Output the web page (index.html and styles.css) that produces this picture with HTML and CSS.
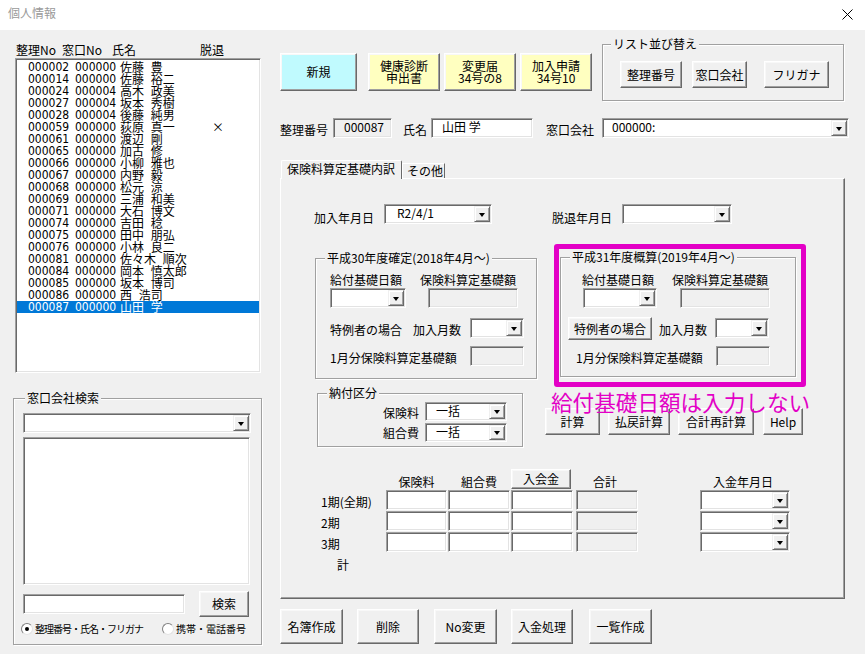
FILE: index.html
```html
<!DOCTYPE html>
<html lang="ja">
<head>
<meta charset="utf-8">
<title>個人情報</title>
<link rel="stylesheet" href="styles.css">
</head>
<body>
<div class="titlebar">
  <span class="title">個人情報</span>
  <svg class="close" width="11" height="11" viewBox="0 0 11 11"><path d="M0.5 0.5L10.5 10.5M10.5 0.5L0.5 10.5" stroke="#000" stroke-width="1"/></svg>
</div>
<div class="main">
  <div class="left">
    <div class="list-head"><span class="h-no">整理No</span><span class="h-win">窓口No</span><span class="h-name">氏名</span><span>脱退</span></div>
    <div class="listbox sunken">
      <div class="lrow"><span class="c-no">000002</span><span class="c-win">000000</span><span class="c-name">佐藤 豊</span></div>
      <div class="lrow"><span class="c-no">000014</span><span class="c-win">000000</span><span class="c-name">佐藤 裕二</span></div>
      <div class="lrow"><span class="c-no">000024</span><span class="c-win">000004</span><span class="c-name">高木 政美</span></div>
      <div class="lrow"><span class="c-no">000027</span><span class="c-win">000004</span><span class="c-name">坂本 秀樹</span></div>
      <div class="lrow"><span class="c-no">000028</span><span class="c-win">000004</span><span class="c-name">後藤 純男</span></div>
      <div class="lrow"><span class="c-no">000059</span><span class="c-win">000000</span><span class="c-name">荻原 真一</span><span class="c-out">×</span></div>
      <div class="lrow"><span class="c-no">000061</span><span class="c-win">000000</span><span class="c-name">渡辺 剛</span></div>
      <div class="lrow"><span class="c-no">000065</span><span class="c-win">000000</span><span class="c-name">加古 修</span></div>
      <div class="lrow"><span class="c-no">000066</span><span class="c-win">000000</span><span class="c-name">小柳 雅也</span></div>
      <div class="lrow"><span class="c-no">000067</span><span class="c-win">000000</span><span class="c-name">内野 毅</span></div>
      <div class="lrow"><span class="c-no">000068</span><span class="c-win">000000</span><span class="c-name">松元 涼</span></div>
      <div class="lrow"><span class="c-no">000069</span><span class="c-win">000000</span><span class="c-name">三浦 和美</span></div>
      <div class="lrow"><span class="c-no">000071</span><span class="c-win">000000</span><span class="c-name">大石 博文</span></div>
      <div class="lrow"><span class="c-no">000074</span><span class="c-win">000000</span><span class="c-name">吉田 稔</span></div>
      <div class="lrow"><span class="c-no">000075</span><span class="c-win">000000</span><span class="c-name">田中 朋弘</span></div>
      <div class="lrow"><span class="c-no">000076</span><span class="c-win">000000</span><span class="c-name">小林 良二</span></div>
      <div class="lrow"><span class="c-no">000081</span><span class="c-win">000000</span><span class="c-name">佐々木 順次</span></div>
      <div class="lrow"><span class="c-no">000084</span><span class="c-win">000000</span><span class="c-name">岡本 慎太郎</span></div>
      <div class="lrow"><span class="c-no">000085</span><span class="c-win">000000</span><span class="c-name">坂本 博司</span></div>
      <div class="lrow"><span class="c-no">000086</span><span class="c-win">000000</span><span class="c-name">西 浩司</span></div>
      <div class="lrow sel"><span class="c-no">000087</span><span class="c-win">000000</span><span class="c-name">山田 学</span></div>
    </div>
    <div class="group search-group">
      <span class="glabel search-label">窓口会社検索</span>
      <div class="combo sunken search-combo"><span class="ctext"></span><span class="cbtn"></span></div>
      <div class="search-list sunken"></div>
      <div class="search-row">
        <div class="field sunken search-input"></div>
        <button class="btn search-btn">検索</button>
      </div>
      <div class="radio-row">
        <span class="radio on"></span><span class="radio-text r1">整理番号・氏名・フリガナ</span>
        <span class="radio r2"></span><span class="radio-text">携帯・電話番号</span>
      </div>
    </div>
  </div>

  <div class="right">
    <div class="toolbar">
      <button class="btn big cyan">新規</button>
      <button class="btn big yellow y1">健康診断<br>申出書</button>
      <button class="btn big yellow y2">変更届<br>34号の8</button>
      <button class="btn big yellow y2">加入申請<br>34号10</button>
      <div class="group sort-group">
        <span class="glabel sort-label">リスト並び替え</span>
        <button class="btn sort s1">整理番号</button>
        <button class="btn sort s2">窓口会社</button>
        <button class="btn sort s3">フリガナ</button>
      </div>
    </div>

    <div class="idrow">
      <span class="lbl id-lbl">整理番号</span>
      <div class="field ro sunken id-field">000087</div>
      <span class="lbl name-lbl">氏名</span>
      <div class="field sunken name-field">山田 学</div>
      <span class="lbl company-lbl">窓口会社</span>
      <div class="combo sunken company-combo"><span class="ctext">000000:</span><span class="cbtn"></span></div>
    </div>

    <div class="tabs">
      <div class="tab active">保険料算定基礎内訳</div>
      <div class="tab">その他</div>
    </div>
    <div class="panel">
      <div class="row-a">
        <span class="lbl date-lbl">加入年月日</span>
        <div class="combo sunken join-combo"><span class="ctext join-text">R2/4/1</span><span class="cbtn"></span></div>
        <span class="lbl date-lbl leave-lbl">脱退年月日</span>
        <div class="combo sunken leave-combo"><span class="ctext"></span><span class="cbtn"></span></div>
      </div>

      <div class="twocol">
        <div class="col-l">
          <div class="group grp30">
            <span class="glabel">平成30年度確定(2018年4月～)</span>
            <div class="grp-heads"><span class="head1">給付基礎日額</span><span>保険料算定基礎額</span></div>
            <div class="grp-fields">
              <div class="combo sunken day-combo30"><span class="ctext"></span><span class="cbtn"></span></div>
              <div class="field ro sunken base-field30"></div>
            </div>
            <div class="grp-r3">
              <span class="lbl special-lbl">特例者の場合</span>
              <span class="lbl months-lbl">加入月数</span>
              <div class="combo sunken months-combo"><span class="ctext"></span><span class="cbtn"></span></div>
            </div>
            <div class="grp-r4">
              <span class="lbl month-base-lbl">1月分保険料算定基礎額</span>
              <div class="field ro sunken small-field"></div>
            </div>
          </div>

          <div class="group grp-pay">
            <span class="glabel">納付区分</span>
            <div class="pay-row">
              <span class="lbl pay-lbl">保険料</span>
              <div class="combo sunken pay-combo"><span class="ctext pay-text">一括</span><span class="cbtn"></span></div>
            </div>
            <div class="pay-row">
              <span class="lbl pay-lbl pay-lbl2">組合費</span>
              <div class="combo sunken pay-combo"><span class="ctext pay-text">一括</span><span class="cbtn"></span></div>
            </div>
          </div>
        </div>

        <div class="col-r">
          <div class="highlight">
            <div class="group grp31">
              <span class="glabel">平成31年度概算(2019年4月～)</span>
              <div class="grp-heads"><span class="head1">給付基礎日額</span><span>保険料算定基礎額</span></div>
              <div class="grp-fields">
                <div class="combo sunken day-combo31"><span class="ctext"></span><span class="cbtn"></span></div>
                <div class="field ro sunken base-field31"></div>
              </div>
              <div class="grp-r3 r3-31">
                <button class="btn special-btn">特例者の場合</button>
                <span class="lbl months-lbl31">加入月数</span>
                <div class="combo sunken months-combo months-combo31"><span class="ctext"></span><span class="cbtn"></span></div>
              </div>
              <div class="grp-r4 r4-31">
                <span class="lbl month-base-lbl">1月分保険料算定基礎額</span>
                <div class="field ro sunken small-field"></div>
              </div>
            </div>
          </div>
          <div class="note">給付基礎日額は入力しない</div>
          <div class="calc-btns">
            <button class="btn calc k1">計算</button>
            <button class="btn calc k2">払戻計算</button>
            <button class="btn calc k3">合計再計算</button>
            <button class="btn calc k4">Help</button>
          </div>
        </div>
      </div>

      <div class="pay-table">
        <div class="trow thead">
          <span class="tlabel"></span>
          <span class="th c1">保険料</span>
          <span class="th c2">組合費</span>
          <button class="btn c3 fee-btn">入会金</button>
          <span class="th c4">合計</span>
          <span class="th c5">入金年月日</span>
        </div>
        <div class="trow">
          <span class="tlabel">1期(全期)</span>
          <div class="field sunken c1"></div>
          <div class="field sunken c2"></div>
          <div class="field sunken c3"></div>
          <div class="field ro sunken c4"></div>
          <div class="combo sunken c5"><span class="ctext"></span><span class="cbtn"></span></div>
        </div>
        <div class="trow">
          <span class="tlabel">2期</span>
          <div class="field sunken c1"></div>
          <div class="field sunken c2"></div>
          <div class="field sunken c3"></div>
          <div class="field ro sunken c4"></div>
          <div class="combo sunken c5"><span class="ctext"></span><span class="cbtn"></span></div>
        </div>
        <div class="trow">
          <span class="tlabel">3期</span>
          <div class="field sunken c1"></div>
          <div class="field sunken c2"></div>
          <div class="field sunken c3"></div>
          <div class="field ro sunken c4"></div>
          <div class="combo sunken c5"><span class="ctext"></span><span class="cbtn"></span></div>
        </div>
        <div class="total-row">計</div>
      </div>
    </div>

    <div class="bottom-btns">
      <button class="btn foot f1">名簿作成</button>
      <button class="btn foot f2">削除</button>
      <button class="btn foot f3">No変更</button>
      <button class="btn foot f4">入金処理</button>
      <button class="btn foot f5">一覧作成</button>
    </div>
  </div>
</div>
</body>
</html>
```

FILE: styles.css
```css
* { box-sizing: border-box; }
html, body { margin: 0; padding: 0; }
body {
  width: 865px;
  height: 654px;
  overflow: hidden;
  background: #f0f0f0;
  font-family: "Noto Sans CJK JP", "Noto Sans", sans-serif;
  font-size: 12px;
  line-height: 14px;
  color: #000;
}
button { font: inherit; color: inherit; padding: 0; margin: 0; }
.main * { flex-shrink: 0; }

/* title bar */
.titlebar {
  height: 30px;
  background: #fff;
  display: flex;
  justify-content: space-between;
  align-items: flex-start;
  padding: 6px 12px 0 8px;
}
.title { color: #9a9a9a; }
.close { margin-top: 3px; }

.main { display: flex; height: 624px; }

/* 3D primitives */
.sunken {
  border: 1px solid;
  border-color: #a0a0a0 #fff #fff #a0a0a0;
  box-shadow: inset 1px 1px 0 #696969, inset -1px -1px 0 #e3e3e3;
}
.btn {
  background: #f0f0f0;
  border: 1px solid;
  border-color: #fff #696969 #696969 #fff;
  box-shadow: inset -1px -1px 0 #a0a0a0, inset 1px 1px 0 #f8f8f8;
  display: flex;
  align-items: center;
  justify-content: center;
  text-align: center;
  line-height: 12px;
  white-space: nowrap;
}
.field { background: #fff; height: 20px; line-height: 15px; white-space: nowrap; }
.field.ro { background: #f0f0f0; }
.combo { display: flex; background: #fff; height: 20px; }
.combo .ctext { flex: 1; line-height: 15px; white-space: nowrap; }
.combo .cbtn {
  width: 16px;
  margin: 1px 1px 1px 0;
  background: #f0f0f0;
  border: 1px solid;
  border-color: #f0f0f0 #696969 #696969 #f0f0f0;
  box-shadow: inset 1px 1px 0 #fff, inset -1px -1px 0 #a0a0a0;
  display: flex;
  align-items: center;
  justify-content: center;
}
.combo .cbtn::after {
  content: "";
  width: 0;
  height: 0;
  border-left: 3.5px solid transparent;
  border-right: 3.5px solid transparent;
  border-top: 4px solid #000;
  margin-top: 1px;
}
.lbl { line-height: 14px; white-space: nowrap; }

.group {
  position: relative;
  border: 1px solid #a0a0a0;
  box-shadow: inset 1px 1px 0 #fff, 1px 1px 0 #fff;
}
.glabel {
  position: absolute;
  top: -8px;
  left: 9px;
  padding: 0 2px;
  background: #f0f0f0;
  line-height: 14px;
  white-space: nowrap;
}

/* left column */
.left { width: 250px; margin-left: 13px; display: flex; flex-direction: column; }
.list-head { margin-top: 13px; height: 14px; padding-left: 3px; display: flex; white-space: nowrap; }
.h-no { width: 46px; }
.h-win { width: 50px; }
.h-name { width: 88px; }
.listbox {
  margin: 1px 0 0 2px;
  width: 246px;
  height: 315px;
  background: #fff;
  padding: 2px 1px 0 1px;
}
.lrow { display: flex; height: 12px; line-height: 12px; padding-left: 11px; white-space: pre; }
.lrow.sel { background: #0078d7; color: #fff; }
.c-no, .c-win { font-family: "Liberation Sans Narrow", "DejaVu Sans Condensed", "Noto Sans CJK JP", sans-serif; }
.c-no { width: 47px; }
.c-win { width: 45px; }
.c-name { width: 92px; word-spacing: 4px; }

.search-group { margin-top: 25px; width: 249px; height: 247px; padding: 14px 0 0 9px; }
.search-label { left: 11px; }
.search-combo { width: 228px; }
.search-list { margin-top: 4px; width: 227px; height: 148px; background: #fff; }
.search-row { display: flex; align-items: center; margin-top: 6px; height: 26px; }
.search-input { width: 162px; }
.search-btn { margin-left: 14px; width: 50px; height: 26px; }
.radio-row { display: flex; align-items: center; margin: 5px 0 0 -2px; height: 14px; font-size: 10px; }
.radio {
  width: 12px;
  height: 12px;
  border-radius: 50%;
  background: #fff;
  border: 1px solid;
  border-color: #808080 #e3e3e3 #e3e3e3 #808080;
  display: flex;
  align-items: center;
  justify-content: center;
}
.radio.on::after { content: ""; width: 4px; height: 4px; border-radius: 50%; background: #000; }
.radio-text { margin-left: 2px; white-space: nowrap; }
.r1 { width: 127px; letter-spacing: -1px; }
.r2 { margin-left: 0; }

/* right column */
.right { margin-left: 17px; width: 570px; display: flex; flex-direction: column; }
.toolbar { display: flex; align-items: flex-start; margin-top: 14px; height: 57px; }
.big { margin-top: 9px; height: 38px; width: 72px; }
.cyan { width: 77px; background: #c0fafe; }
.yellow { background: #ffffc0; }
.y1 { margin-left: 11px; }
.y2 { margin-left: 4px; }
.sort-group { margin-left: 10px; width: 242px; height: 57px; display: flex; align-items: flex-start; padding: 16px 0 0 17px; }
.sort-label { left: 8px; }
.sort { height: 27px; }
.s1 { width: 62px; }
.s2 { width: 55px; margin-left: 10px; }
.s3 { width: 65px; margin-left: 17px; }

.idrow { display: flex; align-items: flex-start; margin-top: 17px; height: 20px; }
.idrow .lbl { margin-top: 5px; }
.id-lbl { width: 53px; }
.id-field { width: 59px; padding-left: 10px; }
.name-lbl { margin-left: 11px; width: 28px; }
.name-field { width: 102px; padding-left: 10px; }
.company-lbl { margin-left: 13px; width: 56px; }
.company-combo { width: 247px; }
.company-combo .ctext { padding-left: 9px; }

/* tabs */
.tabs { display: flex; align-items: flex-end; margin-top: 22px; height: 18px; position: relative; z-index: 1; }
.tab {
  height: 15px;
  border: 1px solid;
  border-color: #fff #696969 transparent #fff;
  border-bottom: none;
  padding: 0 1px 0 4px;
  background: #f0f0f0;
  line-height: 14px;
  white-space: nowrap;
}
.tab.active { height: 19px; margin: 0 0 -1px 1px; padding: 1px 6px 0 5px; border-radius: 2px 2px 0 0; }
.panel {
  width: 565px;
  height: 421px;
  border: 1px solid;
  border-color: #fff #696969 #696969 #fff;
  box-shadow: inset -1px -1px 0 #a0a0a0;
  padding: 0 0 0 33px;
}
.row-a { display: flex; align-items: flex-start; margin-top: 25px; height: 20px; }
.date-lbl { width: 70px; margin-top: 7px; }
.leave-lbl { margin-left: 60px; }
.join-combo { width: 108px; }
.join-text { padding-left: 12px; }
.leave-combo { width: 110px; }

.twocol { display: flex; align-items: flex-start; margin-top: 20px; }
.col-l { width: 231px; }
.col-r { width: 265px; }

.grp30 { margin: 14px 0 0 1px; width: 222px; height: 121px; padding: 14px 0 0 14px; }
.grp31 { margin: 8px 0 0 1px; width: 236px; height: 120px; padding: 15px 0 0 21px; }
.grp-heads { display: flex; height: 15px; white-space: nowrap; }
.head1 { width: 90px; }
.grp-fields { display: flex; height: 20px; }
.day-combo30 { width: 76px; }
.base-field30 { width: 90px; margin-left: 22px; }
.day-combo31 { width: 74px; margin-left: 1px; }
.base-field31 { width: 90px; margin-left: 23px; }
.grp-r3 { display: flex; align-items: flex-start; margin-top: 10px; height: 20px; }
.special-lbl { width: 83px; margin-top: 5px; }
.months-lbl { width: 57px; margin-top: 5px; }
.months-combo { width: 54px; }
.grp-r4 { display: flex; align-items: flex-start; margin-top: 8px; height: 20px; }
.month-base-lbl { width: 140px; margin-top: 5px; }
.small-field { width: 54px; }
.r3-31 { margin: 9px 0 0 -14px; height: 23px; }
.special-btn { width: 84px; height: 23px; }
.months-lbl31 { margin: 6px 0 0 7px; width: 56px; }
.months-combo31 { margin-top: 1px; }
.r4-31 { margin: 6px 0 0 -6px; }

.grp-pay { margin: 14px 0 0 3px; width: 206px; height: 54px; padding-top: 8px; }
.pay-row { display: flex; align-items: flex-start; height: 19px; }
.pay-row + .pay-row { margin-top: 2px; }
.pay-lbl { width: 107px; text-align: right; padding-right: 6px; margin-top: 4px; }
.pay-lbl2 { margin-top: 3px; }
.pay-combo { width: 82px; height: 19px; }
.pay-text { padding-left: 10px; line-height: 14px; }

.highlight {
  margin-left: 9px;
  width: 252px;
  height: 143px;
  border: 5px solid #e300c6;
  border-radius: 3px;
}
.note {
  position: relative;
  z-index: 1;
  margin: 4px 0 0 6px;
  height: 17px;
  font-size: 21.6px;
  line-height: 22px;
  color: #e300c6;
  white-space: nowrap;
}
.calc-btns { display: flex; height: 27px; }
.calc { height: 27px; }
.k1 { width: 55px; }
.k2 { width: 62px; margin-left: 8px; }
.k3 { width: 76px; margin-left: 8px; }
.k4 { width: 40px; margin-left: 9px; }

/* payment table */
.pay-table { margin: 22px 0 0 7px; }
.trow { display: flex; align-items: flex-start; height: 20px; margin-bottom: 1px; }
.tlabel { width: 65px; padding-top: 5px; line-height: 14px; white-space: nowrap; }
.th { padding-top: 6px; text-align: center; line-height: 14px; white-space: nowrap; }
.c1 { width: 61px; }
.c2 { width: 62px; margin-left: 1px; }
.c3 { width: 62px; margin-left: 1px; }
.c4 { width: 62px; margin-left: 3px; }
.c5 { width: 90px; margin-left: 62px; }
.fee-btn { width: 60px; height: 20px; }
.total-row { margin: 6px 0 0 16px; line-height: 14px; }

.bottom-btns { display: flex; margin-top: 10px; }
.foot { height: 35px; }
.f1 { width: 63px; }
.f2 { width: 62px; margin-left: 14px; }
.f3 { width: 63px; margin-left: 15px; }
.f4 { width: 62px; margin-left: 14px; }
.f5 { width: 63px; margin-left: 16px; }
```
